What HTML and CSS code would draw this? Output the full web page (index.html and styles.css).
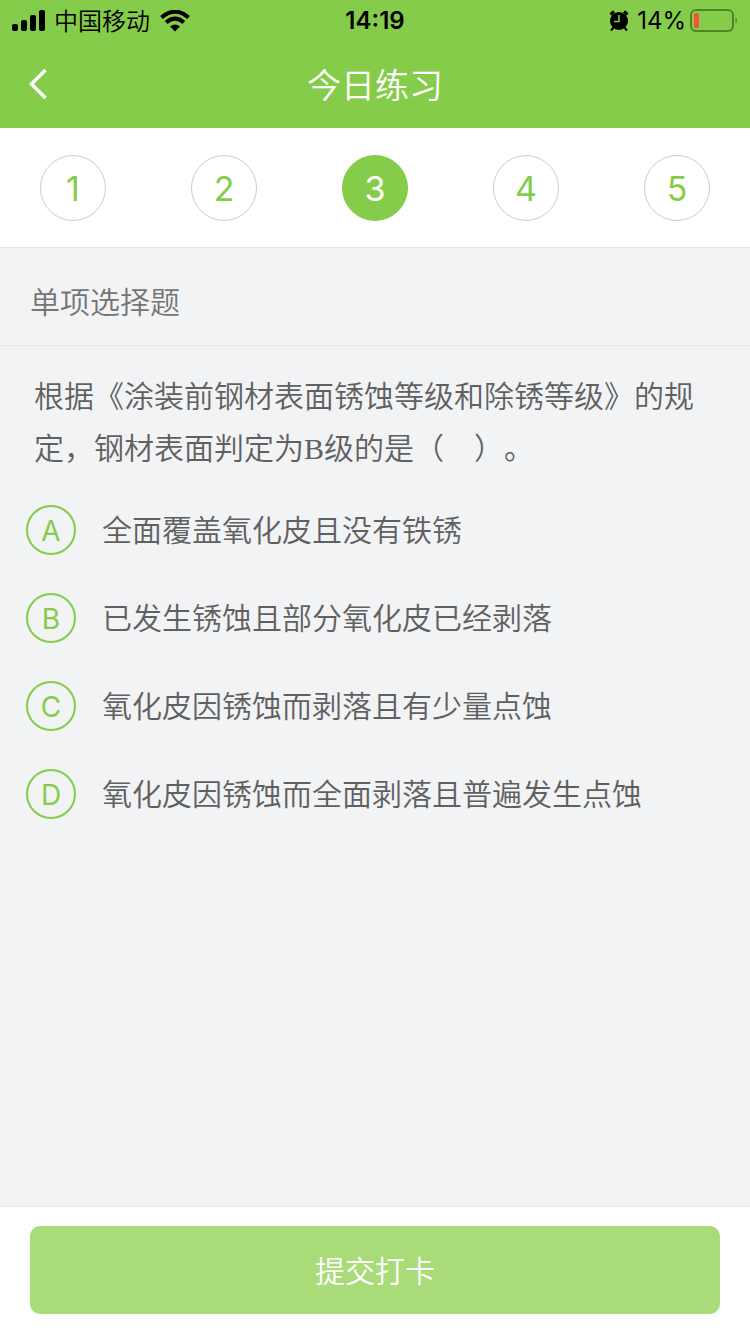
FILE: index.html
```html
<!DOCTYPE html>
<html lang="zh-CN">
<head>
<meta charset="utf-8">
<meta name="viewport" content="width=device-width, initial-scale=1">
<title>今日练习</title>
<link rel="stylesheet" href="styles.css">
</head>
<body>
<form class="page">
  <header class="top">
    <div class="status">
      <div class="status-left">
        <svg class="signal" width="34" height="22" viewBox="0 0 34 22" aria-hidden="true">
          <rect x="0" y="14" width="6" height="7" rx="2"/>
          <rect x="9" y="10" width="6" height="11" rx="2"/>
          <rect x="18" y="5" width="6" height="16" rx="2"/>
          <rect x="27" y="0" width="6" height="21" rx="2"/>
        </svg>
        <span class="carrier">中国移动</span>
        <svg width="30" height="22" viewBox="0 0 30 22" aria-hidden="true">
          <g fill="none" stroke="#000" stroke-width="4">
            <path d="M1.500 7.500Q15-4 28.500 7.500"/>
            <path d="M6.200 12.600Q15 4.800 23.800 12.600"/>
          </g>
          <path d="M10 16.500Q15 12.500 20 16.500L15 21.500Z"/>
        </svg>
      </div>
      <time class="clock">14:19</time>
      <div class="status-right">
        <svg class="alarm" width="20" height="22" viewBox="0 0 20 22" aria-hidden="true">
          <circle cx="10" cy="11" r="9"/>
          <path d="M1.500 4.500L5 1.500M18.500 4.500L15 1.500" fill="none" stroke="#000" stroke-width="3"/>
          <path d="M4.500 17.500L2 20.500M15.500 17.500L18 20.500" stroke="#000" stroke-width="2"/>
          <path d="M10 5V11.500H5" fill="none" stroke="#86cc4b" stroke-width="1.500"/>
        </svg>
        <span>14%</span>
        <svg class="battery" width="48" height="24" viewBox="0 0 48 24" aria-hidden="true">
          <rect x="1" y="1" width="42" height="21" rx="5" fill="none" stroke="#528229" stroke-width="2"/>
          <rect x="4" y="4" width="5" height="15" rx="2" fill="#f5503c"/>
          <path d="M45.500 8Q48.500 11.500 45.500 15Z" fill="#528229"/>
        </svg>
      </div>
    </div>
    <div class="nav">
      <button class="back" type="button" aria-label="返回">
        <svg width="20" height="32" viewBox="0 0 20 32" aria-hidden="true"><path d="M16.500 2L2.500 16L16.500 30" fill="none" stroke="#fff" stroke-width="3.500"/></svg>
      </button>
      <h1 class="title">今日练习</h1>
    </div>
  </header>

  <nav class="steps">
    <button class="step" type="button">1</button>
    <button class="step" type="button">2</button>
    <button class="step step-active" type="button" aria-current="step">3</button>
    <button class="step" type="button">4</button>
    <button class="step" type="button">5</button>
  </nav>

  <main class="content">
    <h2 class="kind">单项选择题</h2>
    <p class="question" id="question">根据《涂装前钢材表面锈蚀等级和除锈等级》的规定，钢材表面判定为B级的是（&nbsp;&nbsp;&nbsp;&nbsp;）。</p>
    <div class="options" role="radiogroup" aria-labelledby="question">
      <label class="option"><span class="mark"><input class="radio" type="radio" name="answer" value="A"><span class="letter">A</span></span><span>全面覆盖氧化皮且没有铁锈</span></label>
      <label class="option"><span class="mark"><input class="radio" type="radio" name="answer" value="B"><span class="letter">B</span></span><span>已发生锈蚀且部分氧化皮已经剥落</span></label>
      <label class="option"><span class="mark"><input class="radio" type="radio" name="answer" value="C"><span class="letter">C</span></span><span>氧化皮因锈蚀而剥落且有少量点蚀</span></label>
      <label class="option"><span class="mark"><input class="radio" type="radio" name="answer" value="D"><span class="letter">D</span></span><span>氧化皮因锈蚀而全面剥落且普遍发生点蚀</span></label>
    </div>
  </main>

  <footer class="footer">
    <button class="submit" type="button">提交打卡</button>
  </footer>
</form>
</body>
</html>
```
FILE: styles.css
```css
* {
  box-sizing: border-box;
}

body {
  margin: 0;
  font-family: Inter, "Noto Sans CJK SC", sans-serif;
  font-size: 30px;
  font-weight: 350;
  text-spacing-trim: space-all;
  color: #606060;
  background: #f2f3f5;
}

button {
  margin: 0;
  padding: 0;
  border: 0;
  font: inherit;
  cursor: pointer;
}

svg {
  display: block;
  flex: none;
}

.page {
  display: flex;
  flex-direction: column;
  min-height: 100vh;
}

.top {
  background: #86cc4b;
}

.status {
  display: grid;
  grid-template-columns: 1fr auto 1fr;
  align-items: center;
  height: 40px;
  padding: 0 12px;
  font-size: 24px;
  line-height: 40px;
  color: #000;
}

.status-left,
.status-right {
  display: flex;
  align-items: center;
}

.carrier {
  padding-top: 2px;
  margin: 0 10px 0 8px;
}

.clock {
  font-weight: 600;
}

.status-right {
  justify-content: flex-end;
  gap: 8px;
  font-weight: 400;
}

.battery {
  margin-left: -4px;
}

.nav {
  display: grid;
  grid-template-columns: 48px 1fr 48px;
  align-items: center;
  height: 88px;
  padding: 0 15px;
}

.back {
  display: grid;
  place-items: center;
  height: 48px;
  background: none;
}

.title {
  margin: 0;
  padding-top: 3px;
  font-size: 34px;
  font-weight: 350;
  line-height: 48px;
  text-align: center;
  color: #fff;
}

.steps {
  display: flex;
  justify-content: space-between;
  padding: 27px 40px 26px;
  border-bottom: 1px solid #e4e5e7;
  background: #fff;
}

.step {
  width: 66px;
  height: 66px;
  border: 1px solid #ccc;
  border-radius: 50%;
  font-size: 34px;
  font-weight: 400;
  color: #86cc4b;
  background: #fff;
}

.step-active {
  border-color: #86cc4b;
  color: #fff;
  background: #86cc4b;
}

.content {
  flex: 1;
}

.kind {
  margin: 0;
  padding: 34px 30px 23px;
  border-bottom: 1px solid #e6e7e9;
  font-size: 30px;
  font-weight: 350;
  line-height: 40px;
  color: #757575;
}

.question {
  margin: 0;
  padding: 25px 34px 30px;
  font-family: "Liberation Serif", "Noto Sans CJK SC", serif;
  line-height: 52px;
}

.options {
  display: flex;
  flex-direction: column;
  gap: 38px;
  padding: 0 26px 38px;
}

.option {
  display: flex;
  align-items: center;
  gap: 26px;
  line-height: 50px;
  cursor: pointer;
}

.mark {
  display: grid;
  flex: none;
  place-items: center;
  width: 50px;
  height: 50px;
  font-size: 28px;
  font-weight: 400;
  line-height: 48px;
  color: #86cc4b;
}

.radio,
.letter {
  grid-area: 1 / 1;
}

.letter {
  padding-top: 2px;
}

.radio {
  width: 50px;
  height: 50px;
  margin: 0;
  border: 2px solid #86cc4b;
  border-radius: 50%;
  appearance: none;
}

.radio:checked {
  background: #86cc4b;
}

.radio:checked + .letter {
  color: #fff;
}

.footer {
  padding: 19px 30px 20px;
  border-top: 1px solid #e6e7e9;
  background: #fff;
}

.submit {
  width: 100%;
  height: 88px;
  padding-bottom: 3px;
  border-radius: 10px;
  color: #fff;
  background: #a9dc79;
}
```
